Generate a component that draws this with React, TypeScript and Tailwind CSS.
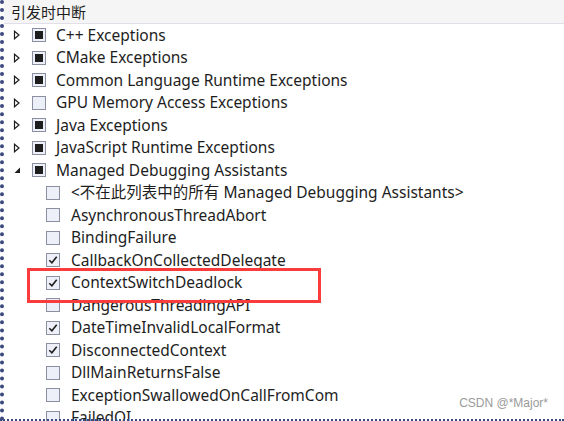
import React from 'react'

type Item = {
  label: string
  level: 1 | 2
  state: 'mixed' | 'empty' | 'checked'
  expander?: 'closed' | 'open'
}

const items: Item[] = [
  { label: 'C++ Exceptions', level: 1, state: 'mixed', expander: 'closed' },
  { label: 'CMake Exceptions', level: 1, state: 'mixed', expander: 'closed' },
  { label: 'Common Language Runtime Exceptions', level: 1, state: 'mixed', expander: 'closed' },
  { label: 'GPU Memory Access Exceptions', level: 1, state: 'empty', expander: 'closed' },
  { label: 'Java Exceptions', level: 1, state: 'mixed', expander: 'closed' },
  { label: 'JavaScript Runtime Exceptions', level: 1, state: 'mixed', expander: 'closed' },
  { label: 'Managed Debugging Assistants', level: 1, state: 'mixed', expander: 'open' },
  { label: '<不在此列表中的所有 Managed Debugging Assistants>', level: 2, state: 'empty' },
  { label: 'AsynchronousThreadAbort', level: 2, state: 'empty' },
  { label: 'BindingFailure', level: 2, state: 'empty' },
  { label: 'CallbackOnCollectedDelegate', level: 2, state: 'checked' },
  { label: 'ContextSwitchDeadlock', level: 2, state: 'checked' },
  { label: 'DangerousThreadingAPI', level: 2, state: 'empty' },
  { label: 'DateTimeInvalidLocalFormat', level: 2, state: 'checked' },
  { label: 'DisconnectedContext', level: 2, state: 'checked' },
  { label: 'DllMainReturnsFalse', level: 2, state: 'empty' },
  { label: 'ExceptionSwallowedOnCallFromCom', level: 2, state: 'empty' },
  { label: 'FailedQI', level: 2, state: 'empty' },
]

const Expander = ({ kind }: { kind: 'closed' | 'open' }) =>
  kind === 'closed' ? (
    <svg width="8" height="10" viewBox="0 0 8 10" className="shrink-0">
      <path d="M1.5 1.2 L6 5 L1.5 8.8 Z" fill="none" stroke="#1e1e1e" strokeWidth="1.2" />
    </svg>
  ) : (
    <svg width="8" height="10" viewBox="0 0 8 10" className="shrink-0">
      <path d="M7 2.5 L7 8 L1.5 8 Z" fill="#1e1e1e" />
    </svg>
  )

const Box = ({ state }: { state: Item['state'] }) => (
  <div className="w-[14px] h-[14px] shrink-0 border border-[#8b90a0] bg-[#eef0f9] flex items-center justify-center">
    {state === 'mixed' && <div className="w-[8px] h-[8px] bg-[#1e1e1e]" />}
    {state === 'checked' && (
      <svg width="10" height="10" viewBox="0 0 10 10">
        <path d="M1.3 5.2 L3.9 7.8 L8.7 1.8" fill="none" stroke="#1e1e1e" strokeWidth="1.6" />
      </svg>
    )}
  </div>
)

const App = () => {
  return (
    <div
      className="relative w-[564px] h-[421px] overflow-hidden bg-white flex"
      style={{ fontFamily: '"Noto Sans", "Noto Sans CJK SC", sans-serif' }}
    >
      <div className="w-[4px] h-full shrink-0 border-l-4 border-dotted border-[#3a4a7e]" />
      <div className="flex-1 flex flex-col">
        <div className="h-[24px] shrink-0 bg-[#f5f5f5] border-b border-[#e2dfea] pl-[7px] flex items-center">
          <span className="text-[15px] text-[#1e1e1e] leading-none" style={{ fontFamily: '"Noto Sans CJK SC", sans-serif' }}>
            引发时中断
          </span>
        </div>
        <div className="flex flex-col shrink-0">
          {items.map((item) => (
            <div key={item.label} className="h-[22.5px] shrink-0 flex items-center text-[15.5px] text-[#1e1e1e] whitespace-nowrap">
              {item.level === 1 ? (
                <>
                  <div className="w-[10px] ml-[9px] flex items-center">
                    {item.expander && <Expander kind={item.expander} />}
                  </div>
                  <div className="ml-[9px]">
                    <Box state={item.state} />
                  </div>
                  <span className="ml-[10px]">{item.label}</span>
                </>
              ) : (
                <>
                  <div className="ml-[42px]">
                    <Box state={item.state} />
                  </div>
                  <span className="ml-[11px]">{item.label}</span>
                </>
              )}
            </div>
          ))}
        </div>
      </div>

      <div className="absolute left-[27px] top-[268px] w-[294px] h-[35px] border-[3px] border-[#fa3c3c]" />

      <div
        className="absolute right-[16px] bottom-[9px] text-[12px] text-[#9a9a9a]"
        style={{ fontFamily: '"Liberation Sans", Arial, sans-serif' }}
      >
        CSDN @*Major*
      </div>

      <div className="absolute left-0 right-0 bottom-0 h-[2px] border-b-2 border-dotted border-[#3a4a7e]" />
    </div>
  )
}

export default App
